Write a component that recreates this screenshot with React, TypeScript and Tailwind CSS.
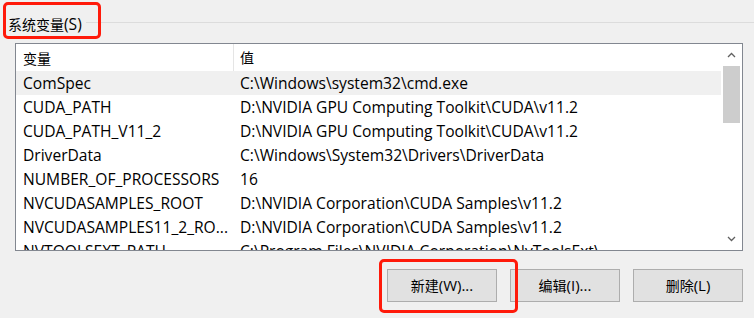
import type React from "react";

const rows = [
  { name: "ComSpec", value: "C:\\Windows\\system32\\cmd.exe", active: true },
  { name: "CUDA_PATH", value: "D:\\NVIDIA GPU Computing Toolkit\\CUDA\\v11.2" },
  { name: "CUDA_PATH_V11_2", value: "D:\\NVIDIA GPU Computing Toolkit\\CUDA\\v11.2" },
  { name: "DriverData", value: "C:\\Windows\\System32\\Drivers\\DriverData" },
  { name: "NUMBER_OF_PROCESSORS", value: "16" },
  { name: "NVCUDASAMPLES_ROOT", value: "D:\\NVIDIA Corporation\\CUDA Samples\\v11.2" },
  { name: "NVCUDASAMPLES11_2_RO...", value: "D:\\NVIDIA Corporation\\CUDA Samples\\v11.2" },
  { name: "NVTOOLSEXT_PATH", value: "C:\\Program Files\\NVIDIA Corporation\\NvToolsExt\\" },
];

const font = "font-['Open_Sans','Noto_Sans_CJK_SC',sans-serif]";

// CJK glyphs render a touch smaller than the latin ones in the original
const Cjk = ({ children }: { children: React.ReactNode }) => (
  <span className="text-[14px]">{children}</span>
);

const buttons = [
  { cjk: "新建", rest: "(W)..." },
  { cjk: "编辑", rest: "(I)..." },
  { cjk: "删除", rest: "(L)" },
];

const App: React.FC = () => {
  return (
    <div className={`relative h-[318px] w-[754px] overflow-hidden bg-[#f0f0f0] text-[15.6px] text-black ${font}`}>
      {/* group title */}
      <div className="flex h-[43px] items-start pt-[13px]">
        <span className="pl-2 pr-1 leading-[22px]">
          <Cjk>系统变量</Cjk>(S)
        </span>
        <div className="mt-[9px] h-px flex-1 bg-[#dcdcdc]" />
      </div>

      {/* list */}
      <div className="ml-[15px] flex h-[208px] w-[728px] border border-[#828790] bg-white">
        <div className="flex-1 overflow-hidden">
          <div className="flex h-[27px] items-center">
            <div className="h-full w-[217px] pl-[7px] leading-[28px]">
              <Cjk>变量</Cjk>
            </div>
            <div className="h-full w-px bg-[#e5e5e5]" />
            <div className="pl-[6px] pt-px">
              <Cjk>值</Cjk>
            </div>
          </div>
          {rows.map((r) => (
            <div
              key={r.name}
              className={`flex h-6 items-center whitespace-nowrap pt-px ${r.active ? "bg-[#f0f0f0]" : ""}`}
            >
              <div className="w-[218px] pl-[7px]">{r.name}</div>
              <div className="pl-[6px]">{r.value}</div>
            </div>
          ))}
        </div>
        <div className="flex w-[21px] flex-col bg-white">
          <div className="flex h-[22px] items-center justify-center">
            <svg width="9" height="6" viewBox="0 0 9 6">
              <path d="M1 5 L4.5 1.5 L8 5" fill="none" stroke="#606060" strokeWidth="1.3" />
            </svg>
          </div>
          <div className="mx-[2px] h-[57px] bg-[#cdcdcd]" />
          <div className="flex-1" />
          <div className="flex h-[22px] items-center justify-center">
            <svg width="9" height="6" viewBox="0 0 9 6">
              <path d="M1 1 L4.5 4.5 L8 1" fill="none" stroke="#606060" strokeWidth="1.3" />
            </svg>
          </div>
        </div>
      </div>

      {/* buttons */}
      <div className="mr-[11px] mt-[18px] flex justify-end gap-[13px]">
        {buttons.map((b) => (
          <button
            key={b.cjk}
            className="h-[33px] w-[110px] border border-[#adadad] bg-[#e1e1e1] text-[15px]"
          >
            <Cjk>{b.cjk}</Cjk>
            {b.rest}
          </button>
        ))}
      </div>

      {/* red annotation boxes */}
      <div className="absolute left-[3px] top-[2px] h-[37px] w-[98px] rounded-[5px] border-[3px] border-[#ff1a0a]" />
      <div className="absolute left-[379px] top-[259px] h-[54px] w-[139px] rounded-[5px] border-[3px] border-[#ff1a0a]" />
    </div>
  );
};

export default App;
